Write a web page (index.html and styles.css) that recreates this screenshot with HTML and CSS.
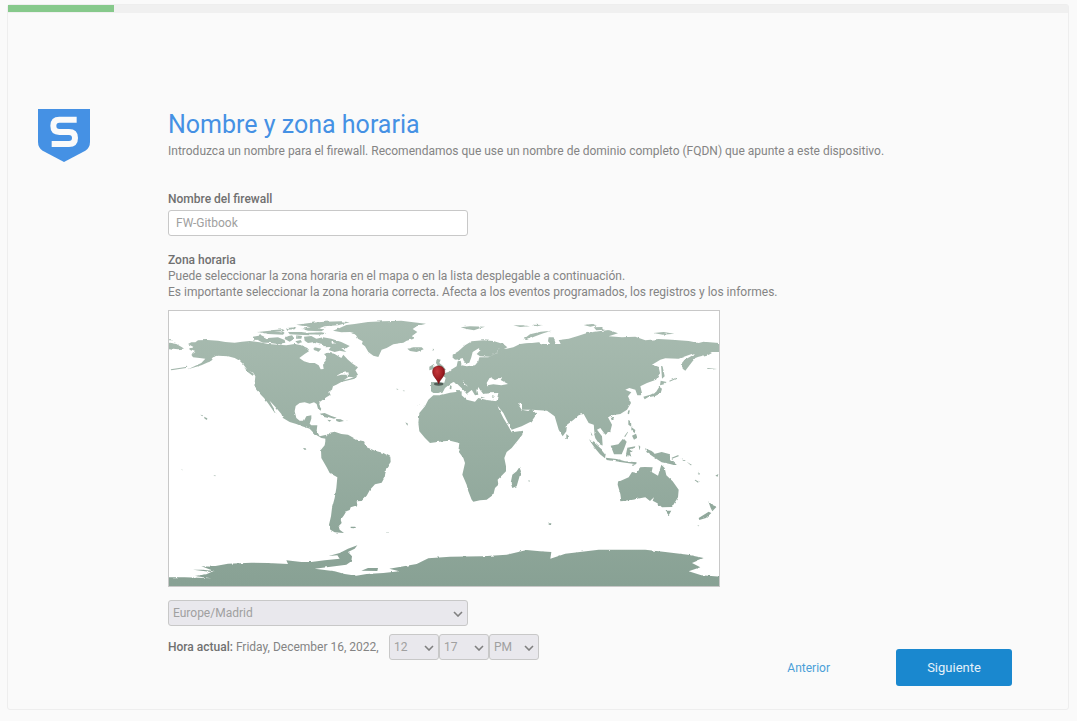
FILE: index.html
```html
<!DOCTYPE html>
<html lang="es">
<head>
<meta charset="utf-8">
<title>Nombre y zona horaria</title>
<link rel="stylesheet" href="styles.css">
</head>
<body>
<main class="panel">
  <div class="progress" role="progressbar" aria-label="Progreso" aria-valuenow="10" aria-valuemin="0" aria-valuemax="100"><div class="progress-bar" style="width:10%"></div></div>
  <form class="wizard">
    <svg class="logo" viewBox="0 0 156 159" role="img" aria-label="Sophos">
      <path fill="#4591e4" d="M0 0H156V98Q156 116 142 125L78 159L14 125Q0 116 0 98Z"/>
      <path fill="none" stroke="#fafafa" stroke-width="18" d="M116 32H64Q46 32 46 50.5Q46 69 64 69H93Q111 69 111 87Q111 105 93 105H41"/>
    </svg>
    <div class="content">
      <h1 class="title">Nombre y zona horaria</h1>
      <p class="text">Introduzca un nombre para el firewall. Recomendamos que use un nombre de dominio completo (FQDN) que apunte a este dispositivo.</p>
      <label class="label label-name" for="fw-name">Nombre del firewall</label>
      <input class="input" id="fw-name" type="text" value="FW-Gitbook">
      <label class="label label-zone" for="zone">Zona horaria</label>
      <p class="text">Puede seleccionar la zona horaria en el mapa o en la lista desplegable a continuación.</p>
      <p class="text">Es importante seleccionar la zona horaria correcta. Afecta a los eventos programados, los registros y los informes.</p>
      <div class="map">
        <svg class="map-art" viewBox="3 9 1650 825" aria-hidden="true">
          <defs>
            <linearGradient id="land" x1="0" y1="0" x2="0" y2="1"><stop offset="0" stop-color="#a9bcb1"/><stop offset="1" stop-color="#88a194"/></linearGradient>
            <radialGradient id="pin" cx=".38" cy=".3" r=".8"><stop offset="0" stop-color="#c5383b"/><stop offset=".55" stop-color="#9e1d22"/><stop offset="1" stop-color="#68080c"/></radialGradient>
            <filter id="coast" filterUnits="userSpaceOnUse" x="3" y="9" width="1650" height="825"><feTurbulence type="fractalNoise" baseFrequency=".06" numOctaves="2" seed="4"/><feDisplacementMap in="SourceGraphic" scale="7" xChannelSelector="R" yChannelSelector="G"/></filter>
            <mask id="world" maskUnits="userSpaceOnUse" x="3" y="9" width="1650" height="825">
              <g fill="#fff" filter="url(#coast)">
                <!-- North America -->
                <path d="M60 108L70 103 82 103 90 97 118 96 150 98 172 102 200 104 222 101 245 99 275 103 300 108 330 110 355 112 380 108 400 112 418 120 425 128 410 138 394 150 408 160 425 165 440 165 452 172 458 184 467 183 465 170 476 158 474 145 468 138 480 134 500 138 520 150 526 140 540 155 555 168 570 178 563 186 545 192 520 195 503 205 520 200 535 200 540 208 528 216 545 212 560 206 566 198 560 212 520 222 505 230 495 235 492 245 481 252 485 262 475 268 455 282 454 290 460 300 458 308 450 302 446 288 438 283 425 287 410 283 395 285 383 294 380 310 385 330 395 338 408 338 415 325 430 322 430 332 425 347 430 352 448 352 446 368 455 385 475 380 474 392 460 390 440 378 425 362 400 354 385 348 365 342 345 330 340 318 325 300 305 278 301 271 312 292 326 316 320 314 300 286 288 270 280 262 265 245 259 235 262 205 256 194 240 188 225 168 215 158 200 150 180 145 150 143 135 148 122 162 100 172 80 178 60 184 100 165 112 152 95 150 75 148 70 140 82 132 68 127 62 122 78 118Z"/>
                <path d="M3 104L25 108 42 118 48 122 30 124 3 121ZM3 94h12v3H3ZM8 184L58 176 59 179 10 187ZM118 158l12-7 4 4-12 8ZM228 178l12 8 18 12-4 5-14-10ZM97 320l8 2-2 3ZM108 326l10 5-1 5-7-4Z"/>
                <!-- Canadian Arctic -->
                <path d="M255 86L280 82 300 92 292 97 255 95ZM270 97L300 90 330 88 350 96 352 104 330 108 300 104 285 104ZM270 72L305 68 350 74 345 80 300 78ZM308 67L345 64 350 69 310 73ZM356 60L385 58 380 64 355 65ZM360 72L400 72 428 76 425 82 390 80 365 79ZM352 86L372 82 380 92 365 101 350 93ZM385 82L402 84 400 92 384 92ZM382 100L398 96 402 103 390 107ZM385 50L430 44 470 41 520 40 545 43 510 52 470 55 450 62 470 64 460 70 420 68 400 62 428 58ZM410 75L460 73 475 76 460 80 412 79Z"/>
                <path d="M408 86L430 84 445 92 465 88 490 92 520 102 545 114 535 121 520 120 535 132 515 128 500 132 482 126 488 117 470 118 462 108 440 102 420 105 410 98ZM440 118L460 122 452 131 436 127Z"/>
                <path d="M455 317l15-2 20 9 16 5-8 3-20-6-14-3ZM504 333l14 1 10 5-14 3-9-3ZM478 335l12 2-6 4ZM535 338l6 1-5 3ZM538 190l18-14 14 24-12 8-18-2Z"/>
                <!-- Greenland -->
                <path d="M495 68L515 60 535 51 560 48 600 42 646 40 700 38 736 43 774 47 746 55 734 63 748 72 732 84 738 92 716 98 706 104 676 109 656 120 641 125 631 147 616 143 601 132 591 115 582 108 584 100 570 92 561 76 546 72 520 73Z"/>
                <!-- South America -->
                <path d="M472 388L486 374 500 371 520 378 540 380 556 389 566 395 588 400 596 418 621 428 646 435 667 446 668 462 654 483 650 508 641 524 621 529 606 545 596 563 581 579 566 580 568 592 548 598 545 606 535 610 528 622 518 635 521 645 512 655 515 665 528 675 500 673 487 665 483 650 489 625 492 600 500 570 505 540 508 508 485 495 476 478 460 450 459 425 470 412 472 400Z"/>
                <path d="M548 656l14 0-4 5-10-1ZM654 670l8 2-2 3ZM405 420l8 1 2 4-6 0ZM38 483l6 2-5 2ZM136 501l8 2-3 2Z"/>
                <!-- Europe, Africa and the North Atlantic -->
                <g transform="translate(546 0)">
                  <path d="M243 222L283 224 287 210 275 198 295 192 303 185 320 175 323 160 332 158 335 172 350 175 375 172 385 160 388 148 415 148 440 135 445 122 470 122 490 118 510 108 540 105 570 108 640 108 640 305 570 305 535 302 522 292 508 284 504 288 515 305 535 309 543 302 560 318 545 340 515 355 485 365 475 345 460 315 440 290 430 285 440 278 445 255 420 256 400 258 390 245 385 237 382 248 385 260 375 262 365 245 350 232 338 215 345 230 368 244 360 250 350 258 340 245 322 228 310 222 300 228 285 240 280 250 265 255 250 255 243 250Z"/>
                  <path d="M308 140L325 130 345 112 365 100 400 97 430 99 460 108 472 118 460 124 445 122 440 135 420 146 390 145 380 138 392 126 386 121 368 132 364 148 358 164 345 168 338 150 320 155 308 150Z"/>
                  <path d="M250 262L270 262 300 254 335 250 335 262 350 275 375 281 385 270 410 276 440 280 445 300 460 330 475 355 485 373 518 368 517 380 505 395 485 420 470 432 463 450 468 475 468 490 443 515 445 530 435 540 430 560 410 575 390 577 370 581 365 575 355 550 350 530 337 500 345 465 340 450 325 430 328 405 300 398 280 400 240 405 225 390 208 370 205 345 208 315 225 295 235 275ZM508 478L513 490 500 535 487 540 482 525 487 500 500 490Z"/>
                  <path d="M260 152L272 155 268 165 280 175 288 186 262 191 268 180 258 165ZM238 176L252 168 254 182 238 187ZM172 122L190 118 215 118 221 124 200 132 180 129ZM332 58L360 55 405 56 385 62 372 67 350 63ZM520 94L540 79 572 71 605 68 580 76 552 86 530 96ZM490 52l30 0 20 3-30 2ZM545 52l28-1-10 4ZM318 246l14 1-3 8-10-4ZM300 232l5 2-1 10-5-1ZM390 266l16 2-12 2ZM425 266l10-1-6 5ZM248 122l4 1-2 6ZM138 242l8 1-4 2ZM158 247l8 2-5 1ZM202 292l8-2-2 4ZM166 343l8 4-2 6ZM535 517l5 1-3 4Z"/>
                </g>
                <!-- Asia -->
                <g transform="translate(1092 0)">
                  <path d="M-30 108L0 105 20 103 45 112 60 115 48 100 50 88 65 88 72 110 88 112 80 96 110 92 135 85 165 75 200 70 230 66 258 76 230 85 270 88 310 86 340 97 380 93 420 95 470 99 500 105 515 101 561 105 561 132 540 132 525 140 500 146 490 150 480 162 460 188 452 182 450 165 457 156 485 140 488 135 460 145 440 152 400 151 385 155 360 170 380 178 384 195 372 215 345 225 325 235 330 255 326 262 316 262 310 245 292 240 280 245 298 253 288 265 297 285 285 305 265 318 240 322 228 328 240 350 235 370 220 380 205 360 195 365 210 385 212 412 200 400 188 380 185 350 170 345 155 318 140 322 125 335 105 350 103 370 92 385 80 365 68 325 45 308 0 305-30 305Z"/>
                  <path d="M386 218L404 222 396 229 384 232ZM382 236L390 242 386 256 370 264 348 268 338 274 334 266 355 260 372 252ZM387 170L392 176 398 205 390 212ZM412 218l20-9 1 3-20 9ZM288 308l6-3-3 14-4-2ZM236 328l8-1 1 8-6 2ZM103 378l8 7-3 9-5-4ZM155 51l25-3 15 4-20 4ZM185 58l25-1 8 8-25 2ZM365 75l30-3 32 5-35 3ZM0 50l35 1-35 3ZM525 180l30 3-28 0Z"/>
                </g>
                <!-- South-east Asia -->
                <g transform="translate(1206 261)">
                  <path d="M58 135L70 140 95 163 107 178 105 190 90 178 75 160ZM107 188L140 192 165 199 200 202 198 208 150 201 110 195ZM122 152L145 148 160 130 170 140 162 162 155 178 132 178ZM72 115L88 132 98 152 88 147 76 130ZM172 158L196 154 194 159 178 163 188 170 180 172 184 185 176 180 174 187 168 178ZM225 160L245 168 255 176 275 171 300 178 300 192 325 214 300 207 275 202 252 187 230 172ZM305 188l20-8 1 4-20 7ZM175 75l8 2 1 18-9-6ZM184 96l12 9-2 10-10-10ZM186 122l12-6 4 12-10 6ZM163 124l10-14 1 2-9 15ZM206 150l5 5-3 12ZM185 210l16-5-12 8ZM376 254l10 6-2 3-10-7ZM386 226l4 14-3-3ZM335 190l12 6-4 2ZM350 200l16 10-4 1ZM436 242l9-5-2 8ZM62 110l6 12-4-1Z"/>
                </g>
                <!-- Oceania -->
                <g transform="translate(1092 0)">
                  <path d="M258 522L290 508 300 492 312 494 325 478 338 477 362 478 359 492 378 503 388 470 398 480 403 502 422 520 440 545 438 568 420 597 390 598 375 585 362 578 366 568 354 579 340 568 300 575 268 580 265 558 257 530ZM400 608L418 608 410 622ZM529 580L540 590 554 596 541 610 536 600ZM530 611L538 615 522 630 502 636 500 630ZM50 646l8 0-1 5-7-1ZM496 652l6 1-3 2Z"/>
                </g>
                <!-- Antarctica -->
                <path d="M-10 808L50 808 130 811 80 804 115 799 130 792 75 785 105 785 140 790 100 775 130 776 180 767 250 764 300 765 360 768 355 757 400 762 430 762 470 757 515 752 508 742 482 744 515 735 540 722 568 712 560 722 540 732 552 745 550 760 535 770 500 775 440 782 500 790 530 798 565 803 596 798 646 795 694 790 664 782 746 768 781 751 846 746 946 745 1016 740 1076 726 1116 730 1150 732 1147 752 1192 737 1292 725 1432 725 1492 732 1560 740 1607 750 1572 765 1597 778 1562 790 1600 802 1680 808V860H-10ZM580 788L600 780 630 780 628 789Z"/>
              </g>
              <g fill="#000" filter="url(#coast)">
                <path d="M956 225L966 208 981 216 1002 207 998 216 1020 228 1000 232 976 229 958 232ZM395 104L412 106 418 113 402 113ZM440 80l14 4-10 2ZM490 100l12 6-10 1Z"/>
              </g>
            </mask>
          </defs>
          <rect x="3" y="9" width="1650" height="825" fill="url(#land)" mask="url(#world)"/>
          <ellipse cx="812" cy="228" rx="14" ry="5" fill="#2e3a34" opacity=".7"/>
          <path d="M812 227C807 212 794 206 794 191C794 181 802 174 812 174S830 181 830 191C830 206 817 212 812 227Z" fill="url(#pin)" stroke="#7c1317" stroke-width="2"/>
        </svg>
      </div>
      <div class="select-box zone-box">
        <select class="select" id="zone"><option>Europe/Madrid</option></select>
        <svg class="chevron" viewBox="0 0 10 6" aria-hidden="true"><path d="M1 1L5 5L9 1"/></svg>
      </div>
      <div class="bottom">
        <div class="time">
          <span class="text now"><b class="strong">Hora actual:</b> Friday, December 16, 2022,</span>
          <div class="select-box time-box"><select class="select" aria-label="Hora"><option>12</option></select><svg class="chevron" viewBox="0 0 10 6" aria-hidden="true"><path d="M1 1L5 5L9 1"/></svg></div>
          <div class="select-box time-box"><select class="select" aria-label="Minutos"><option>17</option></select><svg class="chevron" viewBox="0 0 10 6" aria-hidden="true"><path d="M1 1L5 5L9 1"/></svg></div>
          <div class="select-box time-box"><select class="select" aria-label="AM o PM"><option>PM</option></select><svg class="chevron" viewBox="0 0 10 6" aria-hidden="true"><path d="M1 1L5 5L9 1"/></svg></div>
        </div>
        <div class="nav">
          <a class="prev" href="#">Anterior</a>
          <button class="next" type="button">Siguiente</button>
        </div>
      </div>
    </div>
  </form>
</main>
</body>
</html>
```
FILE: styles.css
```css
* { box-sizing: border-box; }
body {
  margin: 0;
  padding: 4px 8px 11px 7px;
  min-height: 100vh;
  display: flex;
  background: #fafafa;
  color: #848484;
  font: 400 12px/16px Roboto, "Liberation Sans", sans-serif;
}
.panel {
  flex: 1;
  border: 1px solid #eee;
  border-radius: 3px;
}
.progress { height: 8px; background: #f0f0f0; }
.progress-bar { height: 7px; background: #86c98b; }
.wizard {
  display: flex;
  align-items: flex-start;
  gap: 78px;
  padding: 96px 56px 23px 30px;
}
.logo { width: 52px; height: 53px; flex: none; }
.content { flex: 1; min-width: 0; }
.title {
  margin: 0 0 2px;
  font-size: 25px;
  line-height: 32px;
  font-weight: 400;
  color: #4591e4;
}
.text { margin: 0; }
.label { display: block; font-weight: 500; color: #707070; }
.label-name { margin-top: 32px; }
.label-zone { margin-top: 16px; }
.strong { font-weight: 500; color: #707070; }
.input, .select {
  display: block;
  width: 100%;
  height: 26px;
  border: 1px solid #c8c8c8;
  border-radius: 3px;
  font: inherit;
  color: #a0a0a0;
}
.input { max-width: 300px; margin-top: 3px; padding: 0 7px; background: #fff; }
.select { appearance: none; padding: 0 4px; background: #e9e8ed; }
.map {
  max-width: 552px;
  margin-top: 10px;
  border: 1px solid #c8c8c8;
  background: #fff;
}
.map-art { display: block; width: 100%; }
.select-box { position: relative; }
.chevron {
  position: absolute;
  right: 5px;
  top: 11px;
  width: 10px;
  height: 6px;
  fill: none;
  stroke: #808080;
  stroke-width: 1.6;
  pointer-events: none;
}
.zone-box { max-width: 300px; margin-top: 13px; }
.bottom {
  display: flex;
  justify-content: space-between;
  align-items: flex-start;
  margin-top: 8px;
}
.time { display: flex; align-items: center; }
.now { width: 221px; white-space: nowrap; }
.time-box { width: 50px; }
.nav { display: flex; align-items: center; gap: 66px; margin-top: 15px; }
.prev { color: #4a9fd8; text-decoration: none; }
.next {
  width: 116px;
  height: 37px;
  border: 0;
  border-radius: 3px;
  background: #1a88cf;
  color: #e4f1fa;
  font: inherit;
  font-size: 13px;
}
```
